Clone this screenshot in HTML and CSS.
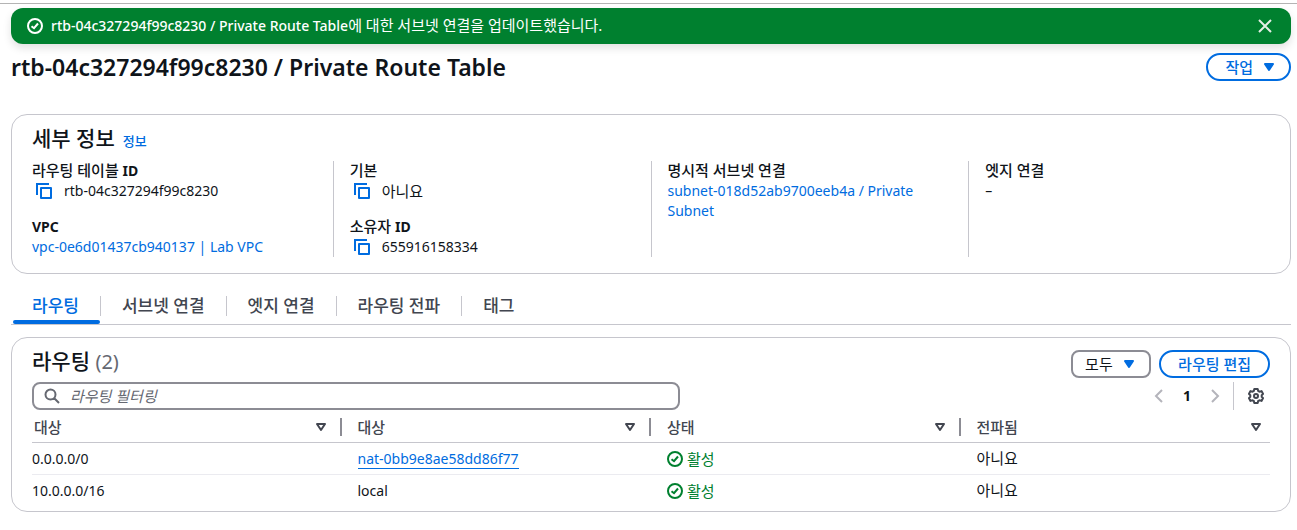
FILE: index.html
```
<!DOCTYPE html>
<html lang="ko">
<head>
  <meta charset="UTF-8" />
  <meta name="viewport" content="width=device-width, initial-scale=1.0" />
  <title>rtb-04c327294f99c8230 | Private Route Table</title>
  <link rel="stylesheet" href="styles.css">
</head>
<body>
  <svg class="sprite" aria-hidden="true">
    <symbol id="icon-check" viewBox="0 0 16 16">
      <circle cx="8" cy="8" r="7" fill="none" stroke="currentColor" stroke-width="2"/>
      <path d="M4.500 8.200 7 10.200 11 5.500" fill="none" stroke="currentColor" stroke-width="2"/>
    </symbol>
    <symbol id="icon-copy" viewBox="0 0 16 16">
      <path d="M1 12V1h12" fill="none" stroke="currentColor" stroke-width="2"/>
      <path d="M5 5h10v10H5z" fill="none" stroke="currentColor" stroke-width="2" stroke-linejoin="round"/>
    </symbol>
    <symbol id="icon-caret" viewBox="0 0 16 16">
      <path d="M4 5h8l-4 6z" fill="currentColor" stroke="currentColor" stroke-width="2" stroke-linejoin="round"/>
    </symbol>
    <symbol id="icon-sort" viewBox="0 0 16 16">
      <path d="M4 5h8l-4 6z" fill="none" stroke="currentColor" stroke-width="2" stroke-linejoin="round"/>
    </symbol>
  </svg>

  <div class="flash" role="status">
    <svg class="icon"><use href="#icon-check"/></svg>
    <p>rtb-04c327294f99c8230 / Private Route Table<span class="ko">에 대한 서브넷 연결을 업데이트했습니다.</span></p>
    <button type="button" class="icon-btn" aria-label="닫기">
      <svg class="icon" viewBox="0 0 16 16"><path d="M2 2l12 12M14 2 2 14" fill="none" stroke="currentColor" stroke-width="2"/></svg>
    </button>
  </div>

  <header class="page-header">
    <h1>rtb-04c327294f99c8230 / Private Route Table</h1>
    <button type="button" class="btn">작업 <svg class="icon"><use href="#icon-caret"/></svg></button>
  </header>

  <main>
    <section class="card details">
      <div class="card-title">
        <h2>세부 정보</h2>
        <a href="#" class="info">정보</a>
      </div>
      <div class="columns">
        <dl>
          <dt>라우팅 테이블 <span class="en">ID</span></dt>
          <dd class="copy"><button type="button" class="icon-btn" aria-label="복사"><svg class="icon"><use href="#icon-copy"/></svg></button>rtb-04c327294f99c8230</dd>
          <dt><span class="en">VPC</span></dt>
          <dd><a href="#">vpc-0e6d01437cb940137 | Lab VPC</a></dd>
        </dl>
        <dl>
          <dt>기본</dt>
          <dd class="copy"><button type="button" class="icon-btn" aria-label="복사"><svg class="icon"><use href="#icon-copy"/></svg></button><span class="ko">아니요</span></dd>
          <dt>소유자 <span class="en">ID</span></dt>
          <dd class="copy"><button type="button" class="icon-btn" aria-label="복사"><svg class="icon"><use href="#icon-copy"/></svg></button>655916158334</dd>
        </dl>
        <dl>
          <dt>명시적 서브넷 연결</dt>
          <dd><a href="#">subnet-018d52ab9700eeb4a / Private Subnet</a></dd>
        </dl>
        <dl>
          <dt>엣지 연결</dt>
          <dd>–</dd>
        </dl>
      </div>
    </section>

    <nav class="tabs">
      <a href="#" class="active">라우팅</a>
      <a href="#">서브넷 연결</a>
      <a href="#">엣지 연결</a>
      <a href="#">라우팅 전파</a>
      <a href="#">태그</a>
    </nav>

    <section class="card routes">
      <div class="routes-header">
        <h2>라우팅 <span class="count">(2)</span></h2>
        <div class="actions">
          <div class="select">
            <select aria-label="라우팅 유형">
              <option>모두</option>
            </select>
            <svg class="icon"><use href="#icon-caret"/></svg>
          </div>
          <button type="button" class="btn">라우팅 편집</button>
        </div>
      </div>

      <div class="tools">
        <div class="search">
          <svg class="icon" viewBox="0 0 16 16"><path d="M10 10l5 5M11.500 6.500a5 5 0 1 1-10 0 5 5 0 0 1 10 0z" fill="none" stroke="currentColor" stroke-width="2"/></svg>
          <input type="text" placeholder="라우팅 필터링" aria-label="라우팅 필터링">
        </div>
        <div class="pager">
          <button type="button" class="icon-btn" aria-label="이전 페이지"><svg class="icon" viewBox="0 0 16 16"><path d="M11 2 5 8l6 6" fill="none" stroke="currentColor" stroke-width="2"/></svg></button>
          <button type="button" class="page">1</button>
          <button type="button" class="icon-btn" aria-label="다음 페이지"><svg class="icon" viewBox="0 0 16 16"><path d="m5 2 6 6-6 6" fill="none" stroke="currentColor" stroke-width="2"/></svg></button>
          <button type="button" class="icon-btn settings" aria-label="기본 설정">
            <svg class="icon" viewBox="0 0 16 16" fill="none" stroke="currentColor" stroke-width="2" stroke-linejoin="round">
              <path d="M6.300 1h3.400l.5 2 1.300.7 2-.6 1.600 2.800L13.700 7.300v1.400l1.400 1.400-1.600 2.800-2-.6-1.300.7-.5 2H6.300l-.5-2-1.300-.7-2 .6L.9 10.100l1.400-1.400V7.300L.9 5.900l1.600-2.800 2 .6L5.800 3z"/>
              <circle cx="8" cy="8" r="2"/>
            </svg>
          </button>
        </div>
      </div>

      <table>
        <thead>
          <tr>
            <th><div>대상 <svg class="icon"><use href="#icon-sort"/></svg></div></th>
            <th><div>대상 <svg class="icon"><use href="#icon-sort"/></svg></div></th>
            <th><div>상태 <svg class="icon"><use href="#icon-sort"/></svg></div></th>
            <th><div>전파됨 <svg class="icon"><use href="#icon-sort"/></svg></div></th>
          </tr>
        </thead>
        <tbody>
          <tr>
            <td>0.0.0.0/0</td>
            <td><a href="#" class="underlined">nat-0bb9e8ae58dd86f77</a></td>
            <td><span class="status"><svg class="icon"><use href="#icon-check"/></svg>활성</span></td>
            <td><span class="ko">아니요</span></td>
          </tr>
          <tr>
            <td>10.0.0.0/16</td>
            <td>local</td>
            <td><span class="status"><svg class="icon"><use href="#icon-check"/></svg>활성</span></td>
            <td><span class="ko">아니요</span></td>
          </tr>
        </tbody>
      </table>
    </section>
  </main>
</body>
</html>
```
FILE: styles.css
```
* { box-sizing: border-box; }
body {
  margin: 0;
  padding: 4px 6px 16px 11px;
  background: linear-gradient(#b4b4b4, #b4b4b4) 0 3px / 100% 1px no-repeat #fff;
  color: #0f141a;
  font-family: "Noto Sans", "Noto Sans CJK KR", sans-serif;
  font-size: 14px;
  line-height: 20px;
}
h1, h2, p, dl, dd { margin: 0; }
a { color: #006ce0; text-decoration: none; }
button, input, select { font: inherit; color: inherit; }
.sprite { display: none; }
.icon {
  display: block;
  flex: none;
  width: 16px;
  height: 16px;
}
.icon-btn {
  border: 0;
  padding: 0;
  background: none;
  cursor: pointer;
}
.ko { font-size: 15px; line-height: 16px; }

/* Aviso superior */
.flash {
  display: flex;
  align-items: center;
  gap: 8px;
  margin-top: 4px;
  padding: 8px 18px 8px 16px;
  border-radius: 12px;
  background: #00802f;
  color: #fff;
  box-shadow: 0 4px 8px rgba(0, 0, 0, 0.12);
}
.flash p { flex: 1; font-weight: 500; }
.flash .ko { font-weight: 400; }
.flash .icon-btn { color: #e4eee6; }

.page-header {
  display: flex;
  justify-content: space-between;
  align-items: center;
  padding-top: 8px;
}
h1 { font-size: 23px; line-height: 30px; font-weight: 600; }
h2 { font-size: 21px; line-height: 22px; font-weight: 500; }

.btn {
  display: flex;
  align-items: center;
  gap: 8px;
  height: 28px;
  padding: 0 17px;
  border: 2px solid #006ce0;
  border-radius: 20px;
  background: #fff;
  color: #006ce0;
  font-size: 15px;
  font-weight: 500;
  cursor: pointer;
}
.page-header .btn { padding-right: 12px; }

.card {
  border: 1px solid #c6c6cd;
  border-radius: 16px;
  background: #fff;
}

.details { margin-top: 32px; padding: 12px 20px 16px; }
.card-title { display: flex; align-items: baseline; gap: 8px; }
.info { font-size: 13px; font-weight: 500; }
.columns { display: flex; margin-top: 10px; }
.columns dl {
  box-sizing: content-box;
  flex: 1 1 0;
  min-height: 96px;
  padding: 0 16px;
  border-left: 1px solid #c6c6cd;
}
.columns dl:first-child { padding-left: 0; border-left: 0; }
.columns dl:last-child { padding-right: 0; }
dt { height: 20px; font-size: 15px; line-height: 18px; font-weight: 500; }
dd + dt { margin-top: 16px; }
.en { font-size: 14px; font-weight: 700; }
.copy {
  display: flex;
  align-items: center;
  gap: 12px;
  min-height: 20px;
  padding-left: 4px;
}
.copy .icon { color: #006ce0; }

.tabs {
  display: flex;
  align-items: flex-start;
  margin-top: 22px;
  border-bottom: 1px solid #c6c6cd;
}
.tabs a {
  position: relative;
  margin-bottom: 8px;
  padding: 0 21px;
  border-left: 1px solid #c6c6cd;
  color: #424650;
  font-size: 17px;
  font-weight: 500;
}
.tabs a:first-child { border-left: 0; }
.tabs .active { color: #006ce0; }
.tabs .active::after {
  content: "";
  position: absolute;
  left: 2px;
  right: 0;
  bottom: -8px;
  height: 4px;
  border-radius: 2px;
  background: #006ce0;
}

.routes { margin-top: 12px; padding: 12px 20px 4px; }
.routes-header { display: flex; justify-content: space-between; }
.count { color: #656871; font-size: 20px; font-weight: 400; }
.actions { display: flex; gap: 8px; }
.select { position: relative; }
.select select {
  appearance: none;
  width: 80px;
  height: 28px;
  padding: 0 12px;
  border: 2px solid #8c8c94;
  border-radius: 8px;
  background: #fff;
  font-size: 15px;
}
.select .icon {
  position: absolute;
  top: 6px;
  right: 14px;
  color: #006ce0;
  pointer-events: none;
}

.tools { display: flex; justify-content: space-between; margin-top: 4px; }
.search {
  display: flex;
  align-items: center;
  gap: 10px;
  width: 648px;
  height: 28px;
  padding: 0 10px;
  border: 2px solid #8c8c94;
  border-radius: 8px;
  color: #656871;
}
.search input {
  flex: 1;
  padding: 0;
  border: 0;
  outline: 0;
  background: none;
  font-size: 15px;
}
.search input::placeholder { color: #656871; font-style: italic; opacity: 1; }
.pager { display: flex; align-items: center; color: #b4b4bb; }
.page {
  width: 40px;
  padding: 0;
  border: 0;
  background: none;
  color: #0f141a;
  font-weight: 700;
}
.pager .settings {
  height: 28px;
  margin-left: 10px;
  padding: 0 6px 0 14px;
  border-left: 1px solid #c6c6cd;
  color: #424650;
}

table { width: 100%; border-collapse: collapse; table-layout: fixed; }
th {
  padding: 8px 0 6px;
  border-bottom: 1px solid #c6c6cd;
  color: #424650;
  font-size: 15px;
  font-weight: 500;
  text-align: left;
}
th div {
  display: flex;
  justify-content: space-between;
  align-items: center;
  height: 18px;
  padding: 0 11px 0 16px;
  border-right: 2px solid #8c8c94;
}
th:first-child div { padding-left: 2px; }
th:last-child div { padding-right: 6px; border-right: 0; }
td { height: 32px; padding: 0 16px; }
td:first-child { padding-left: 0; }
tbody tr + tr td { border-top: 1px solid #ebebf0; }
.underlined { border-bottom: 1px solid #006ce0; }
.status {
  display: flex;
  align-items: center;
  gap: 4px;
  color: #00802f;
  font-size: 15px;
}
```
